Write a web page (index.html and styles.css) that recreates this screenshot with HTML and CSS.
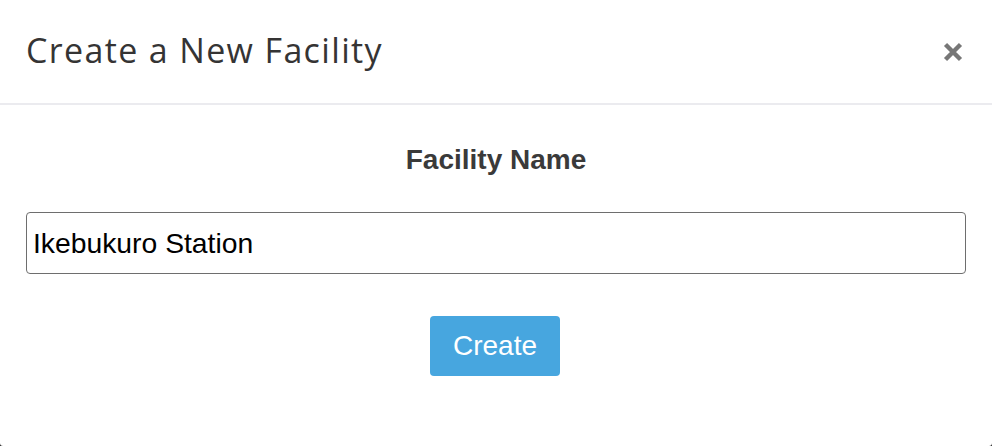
FILE: index.html
```html
<!DOCTYPE html>
<html lang="en">
<head>
<meta charset="utf-8">
<title>Create a New Facility</title>
<link rel="stylesheet" href="styles.css">
</head>
<body>
<div class="modal">
  <div class="modal-header">
    <h1 class="modal-title">Create a New Facility</h1>
    <button class="close" aria-label="Close">
      <svg width="20" height="20" viewBox="0 0 20 20"><path d="M2.5 2.5 L17.5 17.5 M17.5 2.5 L2.5 17.5" stroke="#777" stroke-width="4.4" stroke-linecap="butt"/></svg>
    </button>
  </div>
  <div class="modal-body">
    <label class="field-label" for="name">Facility Name</label>
    <input class="field-input" id="name" type="text" value="Ikebukuro Station">
    <div class="actions">
      <button class="btn-create">Create</button>
    </div>
  </div>
</div>
</body>
</html>
```
FILE: styles.css
```css
html, body {
  margin: 0;
  padding: 0;
  height: 100%;
  background: #2a2a2a;
}
.modal {
  background: #fff;
  height: 446px;
  border-radius: 0 0 3px 3px;
  overflow: hidden;
}
.modal-header {
  height: 103px;
  border-bottom: 2px solid #ebebef;
  display: flex;
  align-items: center;
  justify-content: space-between;
  padding: 0 29px 0 26px;
  box-sizing: content-box;
}
.modal-title {
  margin: 0;
  font-family: "Open Sans", "Noto Sans", sans-serif;
  font-weight: 500;
  font-size: 34px;
  line-height: 40px;
  color: #353434;
  letter-spacing: 1.35px;
  margin-top: -4px;
}
.close {
  border: 0;
  background: none;
  padding: 0;
  width: 20px;
  height: 20px;
  display: block;
  cursor: pointer;
}
.close svg { display: block; }
.modal-body {
  display: flex;
  flex-direction: column;
  align-items: center;
  padding: 0 26px;
}
.field-label {
  display: block;
  margin-top: 40px;
  font-family: "Liberation Sans", Arial, sans-serif;
  font-weight: 700;
  font-size: 28px;
  line-height: 30px;
  color: #3a3a3a;
}
.field-input {
  margin-top: 37px;
  width: 100%;
  height: 62px;
  box-sizing: border-box;
  border: 1.5px solid #6e6e6e;
  border-radius: 4px;
  padding: 0 6px;
  font-family: "Liberation Sans", Arial, sans-serif;
  font-size: 28.3px;
  color: #000;
  outline: none;
}
.actions {
  margin-top: 42px;
  margin-right: 2px;
}
.btn-create {
  display: block;
  width: 130px;
  height: 60px;
  border: 0;
  border-radius: 4px;
  background: #47a6df;
  color: #fff;
  font-family: "Liberation Sans", Arial, sans-serif;
  font-size: 28px;
  padding: 0;
}
```
